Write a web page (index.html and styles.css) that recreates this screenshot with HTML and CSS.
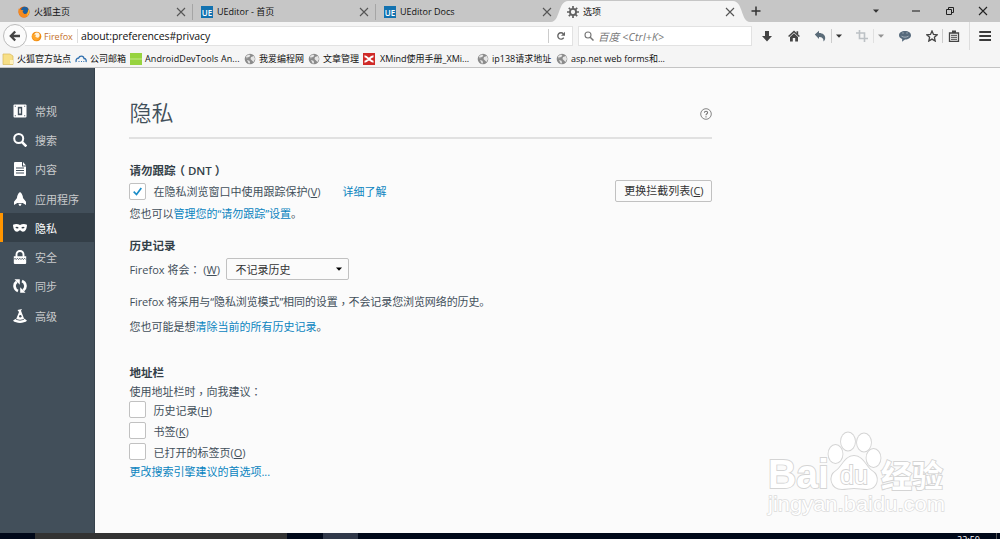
FILE: index.html
```html
<!DOCTYPE html>
<html lang="zh-CN">
<head>
    <meta charset="UTF-8">
    <title>选项</title>
    <link rel="stylesheet" href="styles.css">
</head>
<body>
    <svg class="defs">
        <symbol id="x" viewBox="0 0 10 10"><path d="M1 1l8 8M9 1l-8 8" fill="none" stroke="currentColor" stroke-width="1.1"/></symbol>
        <symbol id="caret" viewBox="0 0 6 4"><path d="M0 .5h6L3 3.8z" fill="currentColor"/></symbol>
        <symbol id="globe" viewBox="0 0 12 12">
            <circle cx="6" cy="6" r="5.3" fill="#8b8b8b"/>
            <path d="M2 3l3-1.6 1.4 1L5 4.2 3.6 4 3 6zM7 4l3-1 1 3-1.5 3L8 7.500 6.500 6zM3 7l2.500.7.5 1.800L5 11z" fill="#e6e6e6"/>
        </symbol>
    </svg>

    <div class="tabs">
        <div class="tab">
            <svg class="tab-icon" viewBox="0 0 12 12">
                <circle cx="6" cy="6" r="5.500" fill="#e66000"/>
                <circle cx="6.800" cy="4.500" r="3.800" fill="#1c5f9e"/>
                <path d="M.6 2.500L3 4l2.500.3-1 1.500 1.500 2c2 .8 3.500-.5 4-2.500l1-2c1 4-1 8-5 8.200C2.500 11.500 0 8.500.6 2.500z" fill="#f58a1f"/>
                <path d="M10 3c1.500 3 .8 6-1.500 7.500 1.200-2 1.600-4 1.500-7.500z" fill="#ffd23c"/>
            </svg>
            <span class="tab-label">火狐主页</span>
            <svg class="tab-close"><use href="#x"/></svg>
        </div>
        <div class="tab">
            <span class="tab-icon ue">UE</span>
            <span class="tab-label">UEditor - 首页</span>
            <svg class="tab-close"><use href="#x"/></svg>
        </div>
        <div class="tab">
            <span class="tab-icon ue">UE</span>
            <span class="tab-label">UEditor Docs</span>
            <svg class="tab-close"><use href="#x"/></svg>
        </div>
        <div class="tab active">
            <svg class="tab-shape" viewBox="0 0 199 22" preserveAspectRatio="none"><path d="M0 22C9 22 7 1 17 1H182C192 1 190 22 199 22z" fill="#f5f5f5"/></svg>
            <svg class="tab-icon" viewBox="0 0 12 12">
                <circle cx="6" cy="6" r="3.100" fill="none" stroke="#606060" stroke-width="1.900"/>
                <path d="M6 0v2.500M6 9.500V12M0 6h2.500M9.500 6H12M1.800 1.800l1.700 1.700M8.500 8.500l1.700 1.700M1.800 10.200l1.700-1.700M8.500 3.500l1.700-1.700" stroke="#606060" stroke-width="1.700"/>
            </svg>
            <span class="tab-label">选项</span>
            <svg class="tab-close"><use href="#x"/></svg>
        </div>
        <svg class="new-tab" viewBox="0 0 10 10"><path d="M5 .5v9M.5 5h9" stroke="#333" stroke-width="1.500"/></svg>
        <div class="window-buttons">
            <svg class="caret"><use href="#caret"/></svg>
            <svg class="win" viewBox="0 0 10 10"><path d="M1 5h8" stroke="#333" stroke-width="1.200"/></svg>
            <svg class="win" viewBox="0 0 10 10"><path d="M1.500 3.500h5v5h-5zM3.500 3.500v-2h5v5h-2" fill="none" stroke="#222" stroke-width="1"/></svg>
            <svg class="win"><use href="#x"/></svg>
        </div>
    </div>

    <div class="toolbar">
        <div class="back">
            <svg viewBox="0 0 12 12"><path d="M11 6H2.500M6.200 1.500L1.800 6l4.400 4.500" fill="none" stroke="#444" stroke-width="2.300"/></svg>
        </div>
        <div class="urlbar">
            <div class="identity">
                <svg viewBox="0 0 12 12"><circle cx="6" cy="6" r="5.300" fill="#f08c10"/><circle cx="6.500" cy="4.500" r="2.900" fill="#fff3dc"/><path d="M1 3l2.500 1 2 0-.8 2L7 8c1.500 0 2.500-1 3-2.500L9 9 5 10.500 1.500 8z" fill="#ffa62b"/></svg>
                <span>Firefox</span>
            </div>
            <span class="url">about:preferences#privacy</span>
            <div class="reload">
                <svg viewBox="0 0 10 10"><path d="M7.700 6.700A3.200 3.200 0 1 1 7.300 2.700" fill="none" stroke="#666" stroke-width="1.400"/><path d="M9 .8v3.900H5z" fill="#666"/></svg>
            </div>
        </div>
        <div class="search">
            <svg viewBox="0 0 10 10"><circle cx="4" cy="4" r="3" fill="none" stroke="#777" stroke-width="1.100"/><path d="M6.200 6.200L9.500 9.500" stroke="#777" stroke-width="1.500"/></svg>
            <span>百度 &lt;Ctrl+K&gt;</span>
        </div>
        <div class="tools">
            <div><svg class="tool" viewBox="0 0 12 12"><path d="M4 1h4v5h3l-5 5.500L1 6h3z" fill="#444"/></svg></div>
            <div><svg class="tool" viewBox="0 0 12 12"><path d="M.6 6.500L6 1.500l5.400 5" fill="none" stroke="#444" stroke-width="1.500"/><path d="M8.500 1.300h1.700v3H8.500zM2 7l4-3.700L10 7v4.500H7.200V8H4.800v3.500H2z" fill="#444"/></svg></div>
            <div class="split"><svg class="tool" viewBox="0 0 12 12"><path d="M.8 4.500L5 .8v2.300c4 0 6.200 2.200 6.200 4.900 0 1.400-.6 2.700-1.700 3.500.2-3-1.300-4.600-4.500-4.500v2z" fill="#5a6b78"/></svg></div>
            <div><svg class="caret"><use href="#caret"/></svg></div>
            <div class="split faded crop"><svg class="tool" viewBox="0 0 12 12"><path d="M3.500 0v8.500H12M0 3h8.500v9" fill="none" stroke="#858e96" stroke-width="1.600"/></svg></div>
            <div class="faded"><svg class="caret"><use href="#caret"/></svg></div>
            <div><svg class="tool" viewBox="0 0 12 12"><path d="M6 1c3.500 0 6 1.800 6 4.300S9.500 9.600 6 9.600L3 11.800 3.200 9C1.200 8.300 0 7 0 5.300 0 2.800 2.500 1 6 1z" fill="#566a7c"/><path d="M2.500 6.200c2 1.300 5 1.300 7 0" fill="none" stroke="#c9d1d8" stroke-width=".7"/><path d="M3.500 2.500h1v1h-1zM7.500 2.500h1v1h-1z" fill="#c9d1d8"/></svg></div>
            <div class="split"><svg class="tool" viewBox="0 0 12 12"><path d="M6 1l1.500 3.400 3.700.4-2.800 2.500.8 3.700L6 9.100 2.800 11l.8-3.700L.8 4.800l3.700-.4z" fill="none" stroke="#444" stroke-width="1.300"/></svg></div>
            <div><svg class="tool" viewBox="0 0 12 12"><path d="M1.500 3h9v8.300h-9z" fill="none" stroke="#444" stroke-width="1.300"/><path d="M4 .5h4V3H4z" fill="#444"/><path d="M3 5.300h6M3 7.300h6M3 9.300h6" stroke="#444"/></svg></div>
            <div class="menu"><svg class="tool" viewBox="0 0 12 12"><path d="M1 2h10.500M1 6h10.500M1 10h10.500" stroke="#3a3a3a" stroke-width="2" stroke-linecap="round"/></svg></div>
        </div>
    </div>

    <div class="bookmarks">
        <div><svg viewBox="0 0 12 12"><path d="M1 1h7l3 2v8.500H1z" fill="#f7df87" stroke="#d8b95a" stroke-width=".7"/><path d="M8 7h3v4H8z" fill="#fff2bd"/></svg><span>火狐官方站点</span></div>
        <div><svg viewBox="0 0 12 12"><path d="M1.200 9C.6 6.500 2 5 3.500 5.200 4.500 2.500 8.500 2.500 9 5.500c1.800 0 2.500 1.500 2 3.500" fill="none" stroke="#2f6fae" stroke-width="1.300"/><path d="M3.500 8.500h1M6 8.500h1M8.300 8.500h1" stroke="#2f6fae" stroke-width="1.200"/></svg><span>公司邮箱</span></div>
        <div><svg viewBox="0 0 12 12"><path d="M0 0h12v12H0z" fill="#97d33f"/><path d="M0 6h12" stroke="#c3ea8b"/></svg><span class="android">AndroidDevTools An...</span></div>
        <div><svg><use href="#globe"/></svg><span>我爱编程网</span></div>
        <div><svg><use href="#globe"/></svg><span>文章管理</span></div>
        <div class="xmind"><svg viewBox="0 0 12 12"><path d="M0 0h12v12H0z" fill="#cf2a27"/><path d="M1.500 3.200c3 0 5.500 5.500 9 5.500M1.500 8.800c3 0 5.500-5.500 9-5.500" fill="none" stroke="#fff" stroke-width="1.900"/></svg><span>XMind使用手册_XMi...</span></div>
        <div><svg><use href="#globe"/></svg><span>ip138请求地址</span></div>
        <div><svg><use href="#globe"/></svg><span>asp.net web forms和...</span></div>
    </div>

    <div class="page">
        <div class="sidebar">
            <div class="category"><svg viewBox="0 0 14 14"><path d="M1.500.5h11q1 0 1 1v11q0 1-1 1h-11q-1 0-1-1v-11q0-1 1-1z" fill="#fff"/><path d="M4.800 2.800h4.400v8.400H4.800z" fill="#424f5a"/><path d="M6.200 4.500h1.600v5H6.200z" fill="#fff"/><path d="M1.800 1.800h1v1h-1zM11.200 1.800h1v1h-1zM1.800 11.200h1v1h-1zM11.200 11.200h1v1h-1z" fill="#424f5a"/></svg>常规</div>
            <div class="category"><svg viewBox="0 0 14 14"><circle cx="5.700" cy="5.500" r="4.500" fill="none" stroke="#fff" stroke-width="2"/><path d="M8.800 8.800l4.600 4.600" stroke="#fff" stroke-width="2.600"/></svg>搜索</div>
            <div class="category"><svg viewBox="0 0 14 14"><path d="M2 0h7v4.500h4V13q0 1-1 1H2q-1 0-1-1V1q0-1 1-1zM10 0l3 3.500h-3z" fill="#fff"/><path d="M3 6h8M3 8.500h8M3 11h8" stroke="#424f5a" stroke-width="1.100"/></svg>内容</div>
            <div class="category"><svg viewBox="0 0 14 14"><path d="M7 0c2.200 1.700 3 4 3 6l3 3.800V13l-3.300-2H4.300L1 13V9.800L4 6c0-2 .8-4.300 3-6zM5.200 11.800h3.600L7 14.500z" fill="#fff"/></svg>应用程序</div>
            <div class="category selected"><svg viewBox="0 0 14 14"><path d="M0 3.800c2.500-1.200 5-.9 7 .3 2-1.200 4.500-1.500 7-.3-.2 3.900-1.500 7-4 7-1.500 0-2.200-1.500-3-1.500s-1.500 1.500-3 1.500c-2.500 0-3.800-3.100-4-7z" fill="#fff"/><path d="M2.300 6.600Q4 4.800 5.800 7.100 4 8.300 2.300 6.600zM11.700 6.600Q10 4.800 8.200 7.100 10 8.300 11.700 6.600z" fill="#343f48"/></svg>隐私</div>
            <div class="category"><svg viewBox="0 0 14 14"><path d="M3.500 7V4.500a3.500 3.500 0 0 1 7 0V7" fill="none" stroke="#fff" stroke-width="1.900"/><path d="M.8 6.300h12.400V13q0 1-1 1H1.800q-1 0-1-1z" fill="#fff"/><path d="M1 9.500l1-1.200 1.200 1.200 1.200-1.200 1.200 1.200 1.200-1.200L8 9.500l1.200-1.200 1.200 1.200 1.200-1.200 1.200 1.200" fill="none" stroke="#424f5a" stroke-width=".9"/></svg>安全</div>
            <div class="category"><svg viewBox="0 0 14 14"><path d="M5 12A5.400 5.400 0 0 1 3.800 2.600M9 2a5.400 5.400 0 0 1 1.200 9.400" fill="none" stroke="#fff" stroke-width="2.700"/><path d="M1.500.2h5.300v5.500zM12.500 13.800H7.200V8.300z" fill="#fff"/></svg>同步</div>
            <div class="category"><svg viewBox="0 0 14 14"><path d="M4.500 1L9 0l-1 1.800L11 9.500q1.700.7 3 2.300c-3 2.800-11 2.800-14 0q1.500-1.500 3.300-2L6 3z" fill="#fff"/><path d="M3 10.300q4 2 8 0" fill="none" stroke="#424f5a" stroke-width=".8"/><circle cx="7.300" cy="7.200" r="1.200" fill="#424f5a"/></svg>高级</div>
        </div>

        <div class="content">
            <div class="header">
                <h1>隐私</h1>
                <svg class="help" viewBox="0 0 12 12"><circle cx="6" cy="6" r="5.300" fill="none" stroke="#777" stroke-width=".9"/><path d="M4.400 4.800C4.400 2.600 7.700 2.700 7.600 4.700 7.500 5.700 6 5.900 6 7.300M6 8.200v1.200" fill="none" stroke="#777" stroke-width="1.100"/></svg>
            </div>

            <h2 class="first">请勿跟踪<span class="dnt">（ DNT ）</span></h2>
            <div class="row tracking">
                <span class="checkbox"><svg viewBox="0 0 9 9"><path d="M.7 4.700l2.800 2.800L8.300 1" fill="none" stroke="#1a8cc8" stroke-width="1.700"/></svg></span>
                <span>在隐私浏览窗口中使用跟踪保护(<u>V</u>)</span>
                <a class="learn-more">详细了解</a>
                <span class="button">更换拦截列表(<u>C</u>)</span>
            </div>
            <div class="row note"><span>您也可以<a>管理您的“请勿跟踪”设置</a>。</span></div>

            <h2 class="history">历史记录</h2>
            <div class="row history-mode">
                <span class="mode-label">Firefox 将会<i lang="zh-TW">：</i> (<u>W</u>)</span>
                <span class="select">不记录历史<svg class="caret"><use href="#caret"/></svg></span>
            </div>
            <div class="row description"><span>Firefox 将采用与“隐私浏览模式”相同的设置<i class="comma" lang="zh-TW">，</i>不会记录您浏览网络的历史。</span></div>
            <div class="row clear"><span>您也可能是想<a>清除当前的所有历史记录</a>。</span></div>

            <h2 class="location">地址栏</h2>
            <div class="row short"><span>使用地址栏时<i class="comma" lang="zh-TW">，</i>向我建议<i lang="zh-TW">：</i></span></div>
            <div class="row option"><span class="checkbox"></span><span>历史记录(<u>H</u>)</span></div>
            <div class="row option"><span class="checkbox"></span><span>书签(<u>K</u>)</span></div>
            <div class="row option"><span class="checkbox"></span><span>已打开的标签页(<u>O</u>)</span></div>
            <div class="row short"><a>更改搜索引擎建议的首选项...</a></div>
        </div>

        <svg class="watermark" viewBox="0 0 190 90">
            <g class="mark">
                <text class="brand" x="4" y="60" font-size="40" textLength="61" lengthAdjust="spacingAndGlyphs">Bai</text>
                <ellipse cx="71.500" cy="26" rx="7" ry="9"/>
                <ellipse cx="84" cy="13.500" rx="7" ry="9"/>
                <ellipse cx="100" cy="14.500" rx="7" ry="9"/>
                <ellipse cx="109.500" cy="30" rx="7" ry="9"/>
                <path d="M90 28c9 0 12 11 18 15 8 5 6 18-5 18-4 0-9-1-13-1s-8 1-12 1c-11 0-14-13-6-18 6-4 9-15 18-15z"/>
                <text class="du" x="76" y="56" font-size="25" textLength="28">du</text>
                <text class="cjk" x="117" y="59" font-size="31" textLength="62">经验</text>
                <text class="site" x="4" y="83" font-size="21" textLength="177" lengthAdjust="spacingAndGlyphs">jingyan.baidu.com</text>
            </g>
        </svg>
    </div>

    <div class="taskbar">
        <span class="task"></span>
        <span class="task small"></span>
        <span class="clock">22:50</span>
    </div>
</body>
</html>
```
FILE: styles.css
```css
* {
    box-sizing: border-box;
}
body {
    margin: 0;
    width: 1000px;
    height: 539px;
    overflow: hidden;
    display: flex;
    flex-direction: column;
    font-family: "Open Sans", "Noto Sans CJK SC", sans-serif;
    font-size: 9px;
    color: #111;
    background-color: #f5f5f5;
    white-space: nowrap;
}
svg {
    flex-shrink: 0;
    display: block;
}
.defs {
    position: absolute;
    width: 0;
    height: 0;
}
.caret {
    width: 6px;
    height: 4px;
    color: #333;
}

/* Tabs */
.tabs {
    display: flex;
    align-items: center;
    height: 22px;
    padding-left: 10px;
    background-color: #c6c6c6;
}
.tab {
    position: relative;
    display: flex;
    align-items: center;
    width: 183px;
    height: 22px;
    padding: 1px 7px 0 8px;
}
.tab:nth-child(-n+2)::after {
    content: "";
    position: absolute;
    right: 0;
    top: 4px;
    width: 1px;
    height: 16px;
    background-color: #a5a5a5;
}
.tab-shape {
    position: absolute;
    left: -8px;
    top: 0;
    width: 199px;
    height: 22px;
}
.tab-icon {
    position: relative;
    width: 12px;
    height: 12px;
    margin-right: 4px;
}
.ue {
    background-color: #1272b0;
    color: #fff;
    font-size: 8px;
    font-weight: 600;
    line-height: 13px;
    text-align: center;
}
.tab-label {
    position: relative;
    flex: 1;
}
.tab-close {
    position: relative;
    width: 10px;
    height: 10px;
    color: #555;
}
.new-tab {
    width: 10px;
    height: 10px;
    margin-left: 9px;
}
.window-buttons {
    display: grid;
    grid-template-columns: 46px 34px 33px 34px;
    justify-items: center;
    align-items: center;
    margin-left: auto;
    margin-bottom: 1px;
}
.win {
    width: 10px;
    height: 10px;
    color: #222;
}

/* Navigation toolbar */
.toolbar {
    display: flex;
    align-items: center;
    height: 28px;
    padding-left: 3px;
}
.back {
    position: relative;
    display: flex;
    align-items: center;
    justify-content: center;
    width: 24px;
    height: 24px;
    border: 1px solid #bbb;
    border-radius: 50%;
    background-color: #fbfbfb;
}
.back svg {
    width: 12px;
    height: 12px;
}
.urlbar {
    display: flex;
    align-items: center;
    width: 548px;
    height: 20px;
    margin-left: -2px;
    padding-left: 6px;
    background-color: #fff;
    border: 1px solid #e2e2e2;
    border-left: none;
}
.identity {
    display: flex;
    align-items: center;
    gap: 2px;
    width: 47px;
    height: 14px;
    border-right: 1px solid #ddd;
    color: #c4702a;
}
.identity svg {
    width: 11px;
    height: 11px;
}
.url {
    flex: 1;
    padding-left: 3px;
    font-size: 10.500px;
    letter-spacing: -.1px;
}
.reload {
    display: flex;
    justify-content: center;
    width: 24px;
    padding: 2px 0;
    border-left: 1px solid #ccc;
}
.reload svg {
    width: 10px;
    height: 10px;
}
.search {
    display: flex;
    align-items: center;
    gap: 4px;
    width: 174px;
    height: 20px;
    margin-left: 5px;
    padding-left: 5px;
    background-color: #fff;
    border: 1px solid #e2e2e2;
    color: #777;
    font-size: 10.500px;
    font-style: italic;
    letter-spacing: .2px;
}
.search svg {
    width: 10px;
    height: 10px;
}
.tools {
    display: grid;
    grid-template-columns: 26px 28px 24px 14px 28px 14px 34px 21px 22px 35px;
    align-items: center;
    margin-left: auto;
}
.tools div {
    display: flex;
    align-items: center;
    justify-content: center;
    height: 14px;
}
.tools .split {
    border-right: 1px solid #ccc;
}
.tools .faded {
    opacity: .5;
}
.tools .crop {
    padding-left: 4px;
}
.tools .menu {
    height: 28px;
    margin-left: 4px;
    border-left: 1px solid #ddd;
}
.tool {
    width: 12px;
    height: 12px;
}

/* Bookmarks toolbar */
.bookmarks {
    display: grid;
    grid-template-columns: 73px 55px 114px 64px 55px 114px 79px auto;
    align-items: center;
    height: 18px;
    padding-left: 2px;
    border-bottom: 1px solid #c4c4c4;
}
.bookmarks div {
    display: flex;
    align-items: center;
    gap: 3px;
}
.bookmarks .xmind {
    gap: 5px;
}
.bookmarks .android {
    letter-spacing: .1px;
}
.bookmarks svg {
    width: 12px;
    height: 12px;
}

/* Preferences page */
.page {
    position: relative;
    display: flex;
    height: 465px;
    background-color: #fbfbfb;
    color: #424f5a;
    font-size: 11px;
}
.sidebar {
    width: 94.500px;
    padding-top: 28px;
    background-color: #424f5a;
    border-right: 1px solid #36424c;
}
.category {
    display: flex;
    align-items: center;
    gap: 8px;
    height: 29.300px;
    padding-left: 13px;
    color: #c8cacc;
}
.category svg {
    width: 14px;
    height: 14px;
}
.category.selected {
    padding-left: 10px;
    border-left: 3px solid #ff9500;
    background-color: #343f48;
    color: #fff;
}
.content {
    width: 583px;
    margin-left: 34.900px;
    padding-top: 24px;
}
.header {
    display: flex;
    align-items: center;
    justify-content: space-between;
    height: 47px;
    padding-bottom: 6px;
    border-bottom: 2px solid #e1e1e1;
}
h1 {
    margin: 0;
    font-size: 22px;
    font-weight: 350;
    line-height: 30px;
}
.help {
    width: 12px;
    height: 12px;
    margin-top: 4px;
}
h2 {
    height: 18px;
    margin: 0;
    font-size: 11.500px;
    font-weight: 600;
    line-height: 18px;
    color: #333f48;
}
.first {
    margin-top: 23px;
}
.dnt {
    margin-left: -2px;
}
.history {
    margin-top: 14px;
}
.location {
    margin-top: 27px;
}
.row {
    display: flex;
    align-items: center;
    height: 22px;
}
.row.note {
    height: 21px;
}
.row.short {
    height: 17px;
}
.row.option {
    height: 21px;
}
.row.history-mode {
    height: 27px;
}
.description {
    margin-top: 8px;
    letter-spacing: -.1px;
}
.clear {
    margin-top: 3px;
}
/* centred full-width punctuation */
.row i {
    font-family: "Noto Sans CJK TC", sans-serif;
    font-style: normal;
}
.row .comma {
    position: relative;
    top: 2px;
}
a {
    color: #0a84bf;
}
.checkbox {
    display: flex;
    align-items: center;
    justify-content: center;
    width: 17px;
    height: 17px;
    margin-right: 7px;
    border: 1px solid #c1c1c1;
    border-radius: 2px;
    background-color: #fff;
}
.checkbox svg {
    width: 9px;
    height: 9px;
}
.learn-more {
    margin-left: 22px;
}
.button {
    width: 97px;
    height: 22px;
    margin-left: auto;
    border: 1px solid #c1c1c1;
    border-radius: 2px;
    line-height: 20px;
    text-align: center;
    color: #333;
}
.mode-label {
    width: 97px;
}
.select {
    display: flex;
    align-items: center;
    justify-content: space-between;
    width: 123px;
    height: 22px;
    padding: 0 6px 0 8px;
    border: 1px solid #c1c1c1;
    border-radius: 2px;
    color: #333;
}
.select .caret {
    color: #000;
}

.watermark {
    position: absolute;
    left: 764px;
    top: 360px;
    width: 190px;
    height: 90px;
}
.mark {
    fill: #fff;
    stroke: #d4d4d4;
    stroke-width: 1.800px;
    paint-order: stroke;
}
.brand {
    font-family: "Liberation Sans", sans-serif;
    font-weight: bold;
}
.du {
    font-family: "Liberation Sans", sans-serif;
}
.cjk {
    font-family: "Noto Sans CJK SC", sans-serif;
    font-weight: bold;
}
.site {
    font-family: "Liberation Sans", sans-serif;
    stroke: #dcdcdc;
    stroke-width: 1.400px;
}

.taskbar {
    display: flex;
    height: 6px;
    padding-left: 35px;
    overflow: hidden;
    background-color: #000819;
}
.task {
    width: 252px;
    background-color: #333;
}
.task.small {
    width: 35px;
    margin-left: 36px;
    background-color: #303849;
}
.clock {
    margin-left: auto;
    padding: 2px 16px 0 0;
    border-right: 1px solid #555;
    margin-right: 3px;
    line-height: 10px;
    color: #fff;
}
```
